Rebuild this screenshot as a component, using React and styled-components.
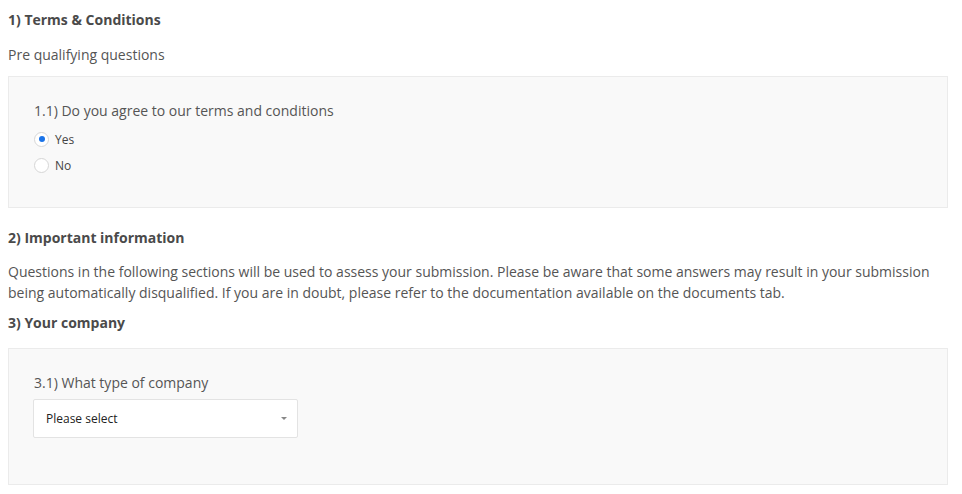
import React from "react";
import styled, { createGlobalStyle } from "styled-components";

const Global = createGlobalStyle`
  html, body { margin: 0; padding: 0; background: #fff; }
  body { font-family: "Open Sans", "Liberation Sans", Arial, sans-serif; color: #555; }
  * { box-sizing: border-box; }
`;

const Page = styled.div`
  width: 940px;
  margin-left: 8px;
  padding-top: 10px;
  display: flex;
  flex-direction: column;
`;

const Heading = styled.h2`
  margin: ${(p) => p.$mt || 0}px 0 0 0;
  font-size: 14px;
  line-height: 20px;
  font-weight: 700;
  color: #4a4a4a;
`;

const Text = styled.p`
  margin: ${(p) => p.$mt || 0}px 0 0 0;
  font-size: 14px;
  line-height: ${(p) => p.$lh || 20}px;
  color: #555;
`;

const Panel = styled.div`
  margin-top: ${(p) => p.$mt || 0}px;
  height: ${(p) => p.$h}px;
  background: #f9f9f9;
  border: 1px solid #ebebeb;
  padding: 24px 24px 0 24px;
  display: flex;
  flex-direction: column;
`;

const Question = styled.div`
  font-size: 14px;
  line-height: 20px;
  color: #555;
  padding-left: 1px;
`;

const Options = styled.div`
  display: flex;
  flex-direction: column;
  margin-top: 5px;
`;

const Option = styled.label`
  display: flex;
  align-items: center;
  gap: 6px;
  height: 26px;
  padding-left: 1px;
  font-size: 12px;
  color: #444;
`;

const Radio = styled.span`
  width: 15px;
  height: 15px;
  border-radius: 50%;
  border: 1px solid #d6d6d6;
  background: #fff;
  display: flex;
  align-items: center;
  justify-content: center;
  &::after {
    content: "";
    width: 6px;
    height: 6px;
    border-radius: 50%;
    background: ${(p) => (p.$checked ? "#1a73e8" : "transparent")};
  }
`;

const Select = styled.div`
  margin-top: 6px;
  width: 265px;
  height: 39px;
  background: #fff;
  border: 1px solid #e3e3e3;
  border-radius: 2px;
  display: flex;
  align-items: center;
  justify-content: space-between;
  padding: 0 8px 0 12px;
  font-size: 12px;
  color: #222;
`;

const Caret = styled.span`
  width: 0;
  height: 0;
  border-left: 3px solid transparent;
  border-right: 3px solid transparent;
  border-top: 3px solid #888;
  margin-right: 2px;
`;

export default function App() {
  return (
    <>
      <Global />
      <Page>
        <Heading>1) Terms &amp; Conditions</Heading>
        <Text $mt={15}>Pre qualifying questions</Text>
        <Panel $mt={11} $h={132}>
          <Question>1.1) Do you agree to our terms and conditions</Question>
          <Options>
            <Option>
              <Radio $checked />
              Yes
            </Option>
            <Option>
              <Radio />
              No
            </Option>
          </Options>
        </Panel>
        <Heading $mt={20}>2) Important information</Heading>
        <Text $mt={13} $lh={21}>
          Questions in the following sections will be used to assess your submission. Please be aware that some answers may result in your submission being automatically disqualified. If you are in doubt, please refer to the documentation available on the documents tab.
        </Text>
        <Heading $mt={10}>3) Your company</Heading>
        <Panel $mt={15} $h={137}>
          <Question>3.1) What type of company</Question>
          <Select>
            Please select
            <Caret />
          </Select>
        </Panel>
      </Page>
    </>
  );
}
